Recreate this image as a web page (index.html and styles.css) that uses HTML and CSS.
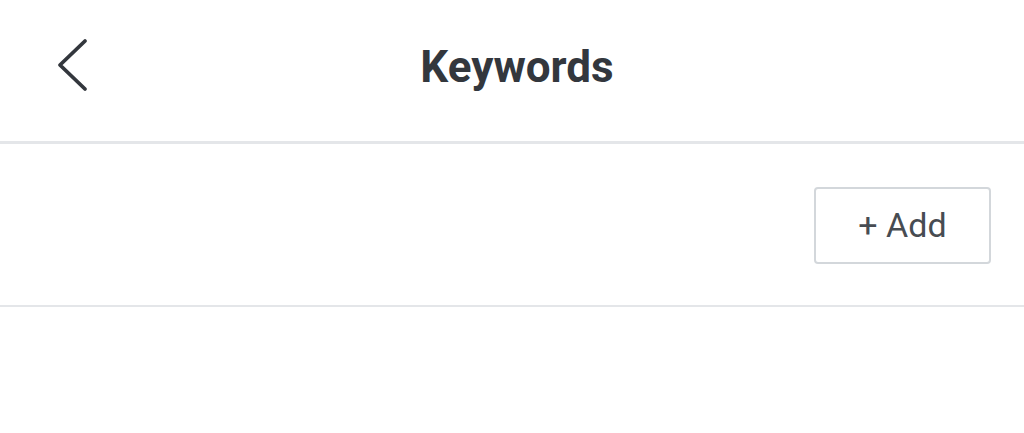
FILE: index.html
```html
<!doctype html>
<html lang="en">
<head>
    <meta charset="utf-8">
    <title>Keywords</title>
    <link rel="stylesheet" href="styles.css">
</head>
<body>
	<div class="cabecera">
		<button class="volver" aria-label="Back">
			<svg width="34" height="56" viewBox="0 0 34 56">
				<polyline points="29,4 4,28 29,52" fill="none" stroke="#33373d" stroke-width="3.8" stroke-linecap="round" stroke-linejoin="round"/>
			</svg>
		</button>
		<h1 class="titulo">Keywords</h1>
	</div>
	<div class="barra">
		<button class="btAdd">+ Add</button>
	</div>
</body>
</html>
```
FILE: styles.css
```css
body{
	margin: 0;
	background: #fff;
	font-family: Roboto, "Liberation Sans", sans-serif;
}
.cabecera{
	position: relative;
	height: 141px;
	display: flex;
	align-items: center;
	justify-content: center;
	border-bottom: 3px solid #e4e6e9;
}
.volver{
	position: absolute;
	left: 56px;
	top: 37px;
	padding: 0;
	border: 0;
	background: none;
}
.volver svg{
	display: block;
}
.titulo{
	margin: 0 0 8px 0;
	font-size: 44px;
	font-weight: bold;
	color: #33373d;
	padding-left: 10px;
}
.barra{
	height: 161px;
	display: flex;
	align-items: center;
	justify-content: flex-end;
	padding-right: 33px;
	border-bottom: 2px solid #e4e6e9;
}
.btAdd{
	width: 177px;
	height: 77px;
	margin-top: 1px;
	border: 2px solid #d3d7db;
	border-radius: 4px;
	background: #fff;
	font-family: Roboto, "Liberation Sans", sans-serif;
	font-size: 34px;
	color: #474c52;
}
```
